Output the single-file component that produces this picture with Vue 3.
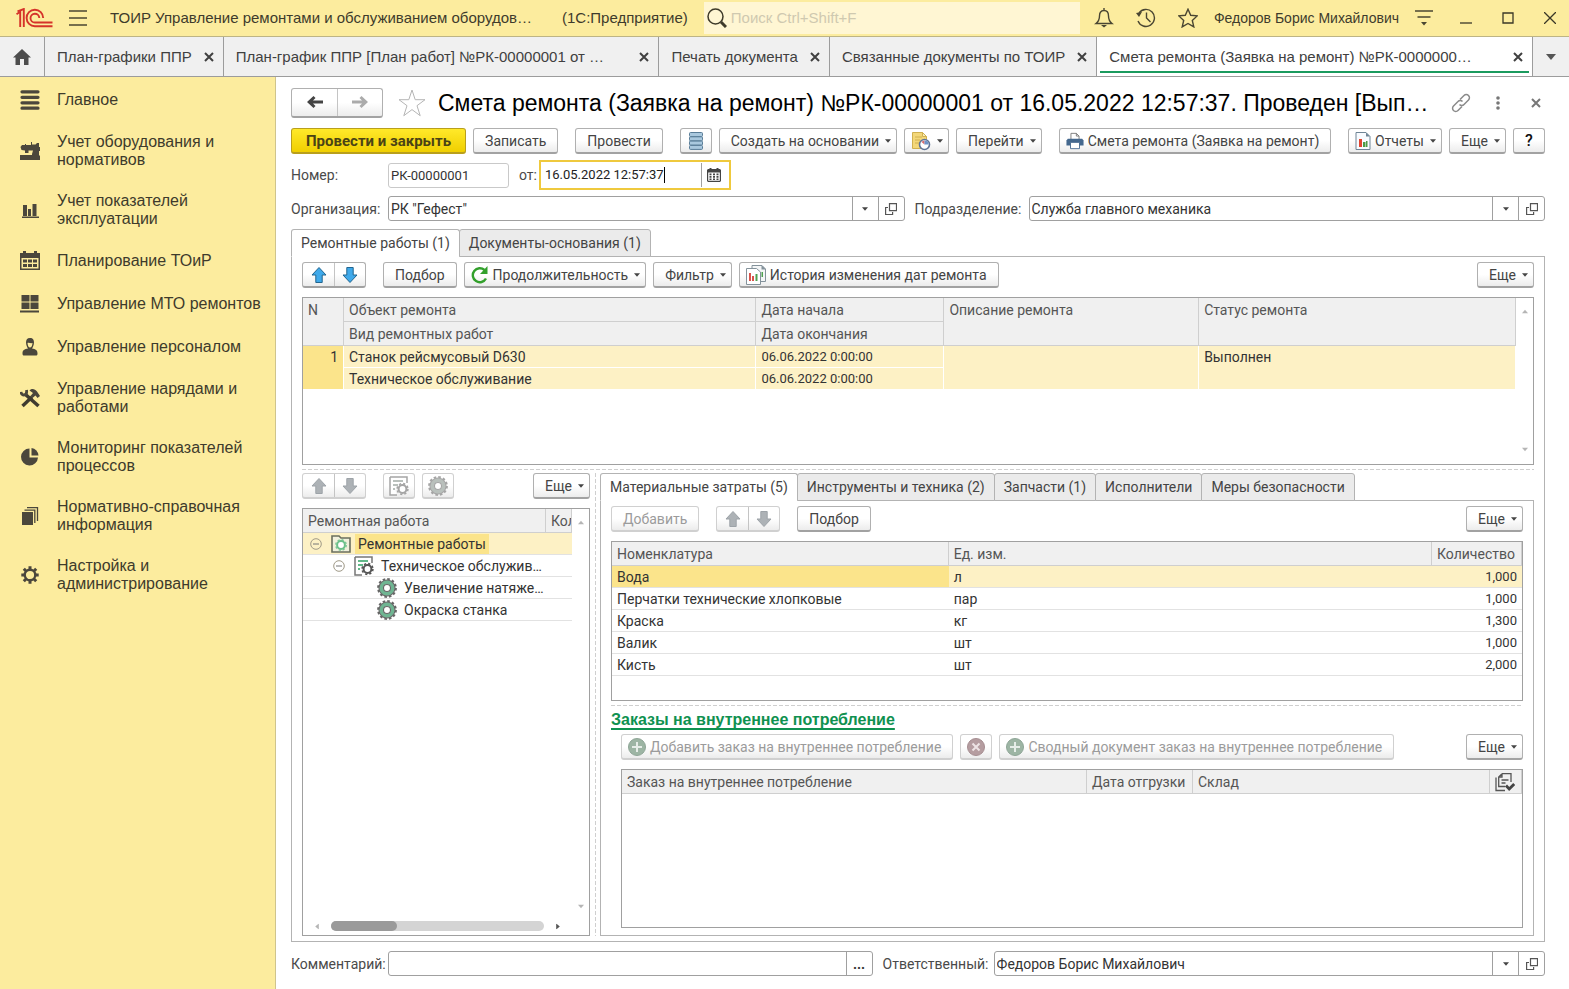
<script setup>
import { ref } from 'vue'

const windowTabs = [
  { title: 'План-графики ППР' },
  { title: 'План-график ППР [План работ] №РК-00000001 от …', wide: true },
  { title: 'Печать документа' },
  { title: 'Связанные документы по ТОИР' },
  { title: 'Смета ремонта (Заявка на ремонт) №РК-0000000…', wide: true, active: true },
]

const sections = [
  { icon: 'main', title: 'Главное' },
  { icon: 'machine', title: 'Учет оборудования и нормативов' },
  { icon: 'bars', title: 'Учет показателей эксплуатации' },
  { icon: 'calendar', title: 'Планирование ТОиР' },
  { icon: 'blocks', title: 'Управление МТО ремонтов' },
  { icon: 'person', title: 'Управление персоналом' },
  { icon: 'tools', title: 'Управление нарядами и работами' },
  { icon: 'pie', title: 'Мониторинг показателей процессов' },
  { icon: 'books', title: 'Нормативно-справочная информация' },
  { icon: 'cog', title: 'Настройка и администрирование' },
]

const works = [
  { level: 0, icon: 'folder-gear', title: 'Ремонтные работы', open: true },
  { level: 1, icon: 'sheet-gear', title: 'Техническое обслужив…', open: true },
  { level: 2, icon: 'gear', title: 'Увеличение натяже…' },
  { level: 2, icon: 'gear', title: 'Окраска станка' },
]

const detailTabs = [
  'Материальные затраты (5)',
  'Инструменты и техника (2)',
  'Запчасти (1)',
  'Исполнители',
  'Меры безопасности',
]

const materials = [
  { name: 'Вода', unit: 'л', qty: '1,000' },
  { name: 'Перчатки технические хлопковые', unit: 'пар', qty: '1,000' },
  { name: 'Краска', unit: 'кг', qty: '1,300' },
  { name: 'Валик', unit: 'шт', qty: '1,000' },
  { name: 'Кисть', unit: 'шт', qty: '2,000' },
]

const number = ref('РК-00000001')
const date = ref('16.05.2022 12:57:37')
const comment = ref('')
</script>

<template>
  <svg class="sprite" aria-hidden="true">
    <symbol id="logo" viewBox="0 0 37 20">
      <g fill="none" stroke="#d5332a" stroke-width="1.900">
        <path d="M.5 6.200 4.200 3.700V19" />
        <path d="M1.500 3.300 7.800 1V19" />
        <path d="M27.200 10A8.300 8.300 0 1 0 19 18.300H36.500" />
        <path d="M23.300 10A4.400 4.400 0 1 0 19 14.500H36.500" />
      </g>
    </symbol>
    <symbol id="home" viewBox="0 0 18 16"><path fill="#4d4d4d" d="M9 0 18 8.500H15.500V16H11V10H7V16H2.500V8.500H0Z" /></symbol>
    <symbol id="burger" viewBox="0 0 18 16"><path stroke="#4a4632" stroke-width="1.400" d="M0 1H18M0 8H18M0 15H18" /></symbol>
    <symbol id="search" viewBox="0 0 20 20"><circle cx="8.500" cy="8.500" r="7.500" fill="none" stroke="#3f3b2b" stroke-width="1.500" /><path stroke="#3f3b2b" stroke-width="3" d="m14 14 5 5" /></symbol>
    <symbol id="bell" viewBox="0 0 18 20"><path fill="none" stroke="#4a4632" stroke-width="1.400" d="M9 2.500C5.500 2.500 4.500 5 4.500 8c0 4-1 5.500-3.500 7.500h16C14.500 13.500 13.500 12 13.500 8c0-3-1-5.500-4.500-5.500ZM9 0v3" /><path fill="#4a4632" d="M6 17h6l-3 2.500Z" /></symbol>
    <symbol id="history" viewBox="0 0 20 20"><path fill="none" stroke="#4a4632" stroke-width="1.400" d="M3 5a8.500 8.500 0 1 1-1 8M10.500 4.500V10l4 4" /><path fill="#4a4632" d="m0 5 6-1-3 5Z" /></symbol>
    <symbol id="star" viewBox="0 0 20 20"><path fill="none" stroke="#4a4632" stroke-width="1.400" d="m10 1.200 2.700 6.100 6.500.6-4.900 4.500 1.500 6.500L10 15.500l-5.800 3.400 1.500-6.500L.8 7.900l6.500-.6Z" /></symbol>
    <symbol id="bigstar" viewBox="0 0 28 28"><path fill="none" stroke="#b5b5b5" d="m14 1 3.200 9.700H27l-8 6 3.200 10L14 20.600 5.800 26.700 9 16.700l-8-6h9.800Z" /></symbol>
    <symbol id="options" viewBox="0 0 18 18"><path stroke="#4a4632" stroke-width="1.500" d="M0 2h18M2.500 8h13" /><path fill="#4a4632" d="M6 13h6l-3 3.500Z" /></symbol>
    <symbol id="minimize" viewBox="0 0 12 12"><path stroke="#3a3727" stroke-width="1.300" d="M0 11h12" /></symbol>
    <symbol id="maximize" viewBox="0 0 12 12"><path fill="none" stroke="#3a3727" stroke-width="1.300" d="M1 1h10v10H1Z" /></symbol>
    <symbol id="close-thin" viewBox="0 0 12 12"><path stroke="#3a3727" stroke-width="1.300" d="m0 0 12 12M12 0 0 12" /></symbol>
    <symbol id="close" viewBox="0 0 10 10"><path stroke="currentColor" stroke-width="2" d="m1 1 8 8M9 1 1 9" /></symbol>
    <symbol id="caret" viewBox="0 0 10 6"><path fill="currentColor" d="M0 0h10L5 6Z" /></symbol>
    <symbol id="back" viewBox="0 0 16 12"><path fill="currentColor" d="m0 6 6.500-6 2 2L6 4.500h10v3H6L8.500 10l-2 2Z" /></symbol>
    <symbol id="forward" viewBox="0 0 16 12"><path fill="currentColor" d="m16 6-6.500-6-2 2L10 4.500H0v3h10L7.500 10l2 2Z" /></symbol>
    <symbol id="link" viewBox="0 0 20 20"><g fill="none" stroke="#8a8a8a" stroke-width="1.500"><path d="M9 6.500 13 2.500a3 3 0 0 1 4.500 4.500l-4.500 4.500a3 3 0 0 1-4.500 0" /><path d="m11 13.500-4 4a3 3 0 0 1-4.500-4.500L7 8.500a3 3 0 0 1 4.500 0" /></g></symbol>
    <symbol id="dots" viewBox="0 0 4 14"><g fill="#777"><circle cx="2" cy="2" r="1.800" /><circle cx="2" cy="7" r="1.800" /><circle cx="2" cy="12" r="1.800" /></g></symbol>

    <symbol id="main" viewBox="0 0 20 20"><path stroke="#4b473c" stroke-width="3.200" stroke-linecap="round" d="M2 1.800h16M2 7.300h16M2 12.800h16M2 18.200h16" /></symbol>
    <symbol id="machine" viewBox="0 0 20 20"><path fill="#4b473c" d="M2 4h3V3h1v1h5V1h1v2.500h3.500L17 2h2v4h1v4h-1v4l1 1v4H0v-5h12v-1l1-3.500H8.500V12H5V9.500L1.500 9 .5 6Z" /></symbol>
    <symbol id="bars" viewBox="0 0 20 20"><path fill="#4b473c" d="M3 5h4v11H3ZM8 9h3v7H8ZM12.500 4h4v12h-4ZM2 16.500h17V18H2Z" /></symbol>
    <symbol id="calendar" viewBox="0 0 20 20"><path fill="#4b473c" fill-rule="evenodd" d="M0 2h3V0h3v2h8V0h3v2h3v17H0ZM1.500 7v10.500h17V7Z" /><path fill="#4b473c" d="M3 8.500h4v3H3Zm5 0h4v3H8Zm5 0h4v3h-4ZM3 13h4v3H3Zm5 0h4v3H8Zm5 0h4v3h-4Z" /></symbol>
    <symbol id="blocks" viewBox="0 0 20 20"><path fill="#4b473c" d="M1.500 1h8v6.500h-8Zm9 0h8v6.500h-8ZM1.500 8.500h8V15h-8Zm9 0h8V15h-8ZM0 16.500h19v2H0Z" /></symbol>
    <symbol id="person" viewBox="0 0 20 20"><path fill="#4b473c" fill-rule="evenodd" d="M10 1c3 0 4 2 4 4.500S12.500 11 12 11.500c3.500.5 5.500 1.500 5.500 5 0 1.500-.5 2-1.500 2H4c-1 0-1.500-.5-1.500-2 0-3.500 2-4.500 5.500-5C7.500 11 6 8 6 5.500S7 1 10 1ZM7.500 6c.3 3 1.200 4.500 2.500 4.500S12.200 9 12.500 6C11 6.500 9 5.500 7.500 6Z" /></symbol>
    <symbol id="tools" viewBox="0 0 20 20"><path fill="none" stroke="#3f3b30" stroke-width="3.600" d="m5.500 6.500 13 11.500" /><path fill="none" stroke="#3f3b30" stroke-width="3.400" d="M2.500 18 12 9" /><path fill="none" stroke="#4b473c" stroke-width="2.800" d="M1 4C1.500 8.500 7.500 8 6.500 2" /><path fill="#4b473c" d="M9.500 2.500C12 0 15 1 17 3.500L20 8l-2.500 2-2-2.500-3 2.500-2-2 2.500-3Z" /></symbol>
    <symbol id="pie" viewBox="0 0 20 20"><path fill="#4b473c" d="M9.500 1.500v9H18a8.500 8.500 0 1 1-8.500-9Z" /><path fill="#4b473c" d="M11.500 1a8 8 0 0 1 7 7.500h-7Z" /></symbol>
    <symbol id="books" viewBox="0 0 20 20"><path fill="#4b473c" d="M2 6h11v13H2Z" /><path fill="none" stroke="#4b473c" stroke-width="1.300" d="M4.500 4.200h10.300V17M7 1.700h10.500V15" /></symbol>
    <symbol id="cog" viewBox="0 0 20 20"><circle cx="10" cy="10" r="5.300" fill="none" stroke="#4b473c" stroke-width="2.400" /><path stroke="#4b473c" stroke-width="3" d="M10 1.300v3M10 15.700v3M1.300 10h3M15.700 10h3M3.800 3.800 6 6M14 14l2.200 2.200M16.200 3.800 14 6M6 14l-2.200 2.200" /></symbol>

    <symbol id="register" viewBox="0 0 14 18"><g fill="#a9c8de" stroke="#587c97"><rect x=".5" y=".5" width="13" height="4" rx="1" /><rect x=".5" y="4.800" width="13" height="4" rx="1" /><rect x=".5" y="9.100" width="13" height="4" rx="1" /><rect x=".5" y="13.400" width="13" height="4" rx="1" /></g></symbol>
    <symbol id="doc-clock" viewBox="0 0 20 20"><path fill="#f3d779" stroke="#d0b050" d="M1.500 1.500h10l4 4v12h-14Z" /><path fill="#fbeeb8" stroke="#d0b050" d="M11.500 1.500v4h4Z" /><path stroke="#d0b050" d="M4 6h7M4 9h5M4 12h4" /><circle cx="13.500" cy="13.500" r="5" fill="#fff" stroke="#5f7396" stroke-width="1.600" /><path fill="#d9696b" d="M13.500 13.500V9.500a4 4 0 0 0-3 1.500Z" /><path fill="#6d93c8" d="M13.500 13.500V9.500a4 4 0 0 1 4 4Z" /></symbol>
    <symbol id="printer" viewBox="0 0 20 20"><path fill="#fff" stroke="#777" d="M5.500 8V1.500h6l3 3V8" /><path fill="none" stroke="#777" d="M11.500 1.500v3h3" /><path fill="#44688e" d="M2 7.500h16l1.500 2V15h-19V9.500Z" /><path fill="#fff" stroke="#44688e" d="M5 11.500h10v7H5Z" /></symbol>
    <symbol id="report" viewBox="0 0 16 18"><path fill="#f8fbff" stroke="#6f8596" d="M1 .5h10l4 4v13H1Z" /><path fill="#6f8596" d="M11 .5v4h4Z" /><path fill="#e0442f" d="M4 7h3v8H4Z" /><path fill="#4c9a45" d="M8 10h2.500v5H8ZM11 9h1.500v6H11Z" /></symbol>
    <symbol id="reports" viewBox="0 0 20 20"><path fill="#f4f6f7" stroke="#84929b" d="M6 .5h10l3.500 3.500v12.500H6Z" /><path fill="#84929b" d="M15.500 0v4.500H20Z" /><path fill="#fff" stroke="#84929b" d="M.5 3.500h10l4 3.500v12.500H.5Z" /><path fill="#d9534b" d="M3 8h2v8H3ZM6 11h2v5H6Z" /><path fill="#4fa150" d="M9.500 9h2v7h-2ZM15.500 7h1.500v5h-1.500Z" /></symbol>
    <symbol id="refresh" viewBox="0 0 18 18"><path fill="none" stroke="#33a02c" stroke-width="2.400" d="M13.500 4A7 7 0 1 0 15 12.500" /><path fill="#33a02c" d="M16.500 0v8H9Z" /></symbol>
    <symbol id="up" viewBox="0 0 16 18"><path fill="currentColor" stroke="var(--edge)" stroke-linejoin="round" d="m8 1.500 7 7.500h-3.800v7.500H4.800V9H1Z" /></symbol>
    <symbol id="down" viewBox="0 0 16 18"><path fill="currentColor" stroke="var(--edge)" stroke-linejoin="round" d="M8 16.500 1 9h3.800V1.500h6.400V9H15Z" /></symbol>
    <symbol id="date" viewBox="0 0 14 14"><path fill="#444" fill-rule="evenodd" d="M1 1h1.500V0h2v1h5V0h2v1H13l1 1v11l-1 1H1l-1-1V2ZM1.200 4.500v8.300h11.600V4.500Z" /><path fill="#444" d="M2.500 5.500h2v1.700h-2Zm3.500 0h2v1.700H6Zm3.500 0h2v1.700h-2ZM2.500 8h2v1.700h-2ZM6 8h2v1.700H6Zm3.500 0h2v1.700h-2Zm-7 2.500h2V12h-2Zm3.500 0h2V12H6Zm3.500 0h2V12h-2Z" /></symbol>
    <symbol id="open" viewBox="0 0 12 12"><path fill="none" stroke="#555" stroke-width="1.200" d="M4.500.6h7v7h-7ZM3 4.500H.6v7h7V9" /></symbol>
    <symbol id="folder-gear" viewBox="0 0 20 20"><path fill="#f1f0dc" stroke="#6a6f5e" stroke-width="1.600" d="M1 2h7l2 2h9v14H1Z" /><circle cx="10" cy="11" r="5.300" fill="none" stroke="#7cc896" stroke-width="1.300" stroke-dasharray="2.200 1.960" /><circle cx="10" cy="11" r="3.900" fill="#fff" stroke="#6cc08a" stroke-width="2" /></symbol>
    <symbol id="sheet-gear" viewBox="0 0 20 20"><path fill="#fff" stroke="var(--sheet, #777)" stroke-width="1.500" d="M1 1h17v6M1 1v18h7" /><path stroke="var(--mark, #62b889)" stroke-width="1.800" d="M4 5h10M4 9h5M4 13h2" /><circle cx="13.500" cy="13" r="5.400" fill="none" stroke="var(--sheet, #555)" stroke-width="1.600" stroke-dasharray="2.200 2.040" /><circle cx="13.500" cy="13" r="3.900" fill="#fff" stroke="var(--sheet, #555)" stroke-width="2" /></symbol>
    <symbol id="gear" viewBox="0 0 20 20"><circle cx="10" cy="10" r="8.900" fill="none" stroke="var(--sheet, #666)" stroke-width="2" stroke-dasharray="2.600 2.060" /><circle cx="10" cy="10" r="5.800" fill="#fff" stroke="var(--mark, #6fb592)" stroke-width="4.200" /><circle cx="10" cy="10" r="8" fill="none" stroke="var(--sheet, #666)" stroke-width="1.100" /><circle cx="10" cy="10" r="3.500" fill="#fff" stroke="var(--sheet, #666)" stroke-width="1.100" /></symbol>
    <symbol id="minus" viewBox="0 0 12 12"><circle cx="6" cy="6" r="5.300" fill="none" stroke="#a09a88" /><path stroke="#777" d="M3 6h6" /></symbol>
    <symbol id="plus" viewBox="0 0 18 18"><circle cx="9" cy="9" r="8.500" fill="#9db5a4" stroke="#8ea596" /><path stroke="#e6ede8" stroke-width="2" d="M9 4v10M4 9h10" /></symbol>
    <symbol id="remove" viewBox="0 0 18 18"><circle cx="9" cy="9" r="8.500" fill="#b59da0" stroke="#a58d90" /><path stroke="#eee4e5" stroke-width="2" d="m5.500 5.500 7 7M12.500 5.500l-7 7" /></symbol>
    <symbol id="copies" viewBox="0 0 20 20"><path fill="none" stroke="#555" stroke-width="1.300" d="M7 1.700h9V10M7 1.700 3.700 5v9.500H10M3.700 5H7V1.700M1 5.500v13h9M6.500 8h7M6.500 11h4" /><path fill="none" stroke="#444" stroke-width="2.800" d="m11 13.500 3.200 3.500 5-5" /></symbol>
  </svg>

  <div class="app">
    <header class="titlebar">
      <svg class="logo"><use href="#logo" /></svg>
      <button class="bare" aria-label="Меню"><svg class="i18x16"><use href="#burger" /></svg></button>
      <span class="app-name">ТОИР Управление ремонтами и обслуживанием оборудов…</span>
      <span class="platform">(1С:Предприятие)</span>
      <label class="search">
        <svg class="i20"><use href="#search" /></svg>
        <input type="text" placeholder="Поиск Ctrl+Shift+F" aria-label="Поиск" />
      </label>
      <nav class="sys">
        <button class="bare" aria-label="Уведомления"><svg class="i20"><use href="#bell" /></svg></button>
        <button class="bare" aria-label="История"><svg class="i20"><use href="#history" /></svg></button>
        <button class="bare" aria-label="Избранное"><svg class="i20"><use href="#star" /></svg></button>
      </nav>
      <a class="user" href="#">Федоров Борис Михайлович</a>
      <button class="bare opts" aria-label="Настройки"><svg class="i18"><use href="#options" /></svg></button>
      <div class="winctl">
        <button class="bare" aria-label="Свернуть"><svg class="i12"><use href="#minimize" /></svg></button>
        <button class="bare" aria-label="Развернуть"><svg class="i12"><use href="#maximize" /></svg></button>
        <button class="bare" aria-label="Закрыть"><svg class="i12"><use href="#close-thin" /></svg></button>
      </div>
    </header>

    <nav class="wintabs">
      <button class="home" aria-label="Начальная страница"><svg class="i18x16"><use href="#home" /></svg></button>
      <div v-for="t in windowTabs" :key="t.title" class="wintab" :class="{ wide: t.wide, active: t.active }">
        <a href="#">{{ t.title }}</a>
        <button class="bare" aria-label="Закрыть вкладку"><svg class="i10"><use href="#close" /></svg></button>
      </div>
      <button class="more-tabs" aria-label="Все вкладки"><svg class="i10x6"><use href="#caret" /></svg></button>
    </nav>

    <div class="body">
      <nav class="sidebar">
        <a v-for="s in sections" :key="s.icon" href="#">
          <svg class="i20"><use :href="'#' + s.icon" /></svg>
          <span>{{ s.title }}</span>
        </a>
      </nav>

      <main class="form">
        <div class="heading">
          <div class="pair nav-pair">
            <button aria-label="Назад"><svg class="i16x12"><use href="#back" /></svg></button>
            <button aria-label="Вперед" class="faded"><svg class="i16x12"><use href="#forward" /></svg></button>
          </div>
          <svg class="i28"><use href="#bigstar" /></svg>
          <h1>Смета ремонта (Заявка на ремонт) №РК-00000001 от 16.05.2022 12:57:37. Проведен [Вып…</h1>
          <div class="head-tools">
            <button class="bare" aria-label="Ссылка"><svg class="i20"><use href="#link" /></svg></button>
            <button class="bare" aria-label="Действия"><svg class="i4x14"><use href="#dots" /></svg></button>
            <button class="bare shut" aria-label="Закрыть"><svg class="i10"><use href="#close" /></svg></button>
          </div>
        </div>

        <div class="toolbar commands">
          <button class="btn primary">Провести и закрыть</button>
          <button class="btn">Записать</button>
          <button class="btn apart">Провести</button>
          <button class="btn icon apart" aria-label="Движения"><svg class="i14x18"><use href="#register" /></svg></button>
          <button class="btn drop">Создать на основании<svg class="tri"><use href="#caret" /></svg></button>
          <button class="btn drop pic" aria-label="Графики"><svg class="i20"><use href="#doc-clock" /></svg><svg class="tri"><use href="#caret" /></svg></button>
          <button class="btn drop">Перейти<svg class="tri"><use href="#caret" /></svg></button>
          <button class="btn pic apart"><svg class="i18"><use href="#printer" /></svg>Смета ремонта (Заявка на ремонт)</button>
          <button class="btn drop pic push"><svg class="i16x18"><use href="#report" /></svg>Отчеты<svg class="tri"><use href="#caret" /></svg></button>
          <button class="btn drop">Еще<svg class="tri"><use href="#caret" /></svg></button>
          <button class="btn icon help">?</button>
        </div>

        <div class="line number-line">
          <label class="cap" for="number">Номер:</label>
          <input id="number" v-model="number" class="text number" type="text" />
          <label class="from" for="date">от:</label>
          <div class="datebox">
            <input id="date" v-model="date" type="text" />
            <i class="cursor"></i>
            <button aria-label="Выбрать дату"><svg class="i14"><use href="#date" /></svg></button>
          </div>
        </div>

        <div class="line org-line">
          <label class="cap" for="org">Организация:</label>
          <div class="combo">
            <select id="org"><option>РК "Гефест"</option></select>
            <span class="arrow"><svg class="tri"><use href="#caret" /></svg></span>
            <button aria-label="Открыть организацию"><svg class="i12"><use href="#open" /></svg></button>
          </div>
          <label class="cap2" for="dep">Подразделение:</label>
          <div class="combo">
            <select id="dep"><option>Служба главного механика</option></select>
            <span class="arrow"><svg class="tri"><use href="#caret" /></svg></span>
            <button aria-label="Открыть подразделение"><svg class="i12"><use href="#open" /></svg></button>
          </div>
        </div>

        <div class="tabs main-tabs">
          <button class="active">Ремонтные работы (1)</button>
          <button>Документы-основания (1)</button>
        </div>

        <section class="page">
          <div class="toolbar">
            <div class="pair blue">
              <button aria-label="Вверх"><svg class="i16x18"><use href="#up" /></svg></button>
              <button aria-label="Вниз"><svg class="i16x18"><use href="#down" /></svg></button>
            </div>
            <button class="btn apart">Подбор</button>
            <button class="btn drop pic"><svg class="i18"><use href="#refresh" /></svg>Продолжительность<svg class="tri"><use href="#caret" /></svg></button>
            <button class="btn drop">Фильтр<svg class="tri"><use href="#caret" /></svg></button>
            <button class="btn pic"><svg class="i20"><use href="#reports" /></svg>История изменения дат ремонта</button>
            <button class="btn drop push">Еще<svg class="tri"><use href="#caret" /></svg></button>
          </div>

          <div class="grid repairs">
            <div class="grid-view">
              <table>
                <colgroup><col class="c-n" /><col class="c-object" /><col class="c-date" /><col class="c-note" /><col /></colgroup>
                <thead>
                  <tr><th rowspan="2">N</th><th>Объект ремонта</th><th>Дата начала</th><th rowspan="2">Описание ремонта</th><th rowspan="2">Статус ремонта</th></tr>
                  <tr><th>Вид ремонтных работ</th><th>Дата окончания</th></tr>
                </thead>
                <tbody>
                  <tr class="sel"><td rowspan="2" class="cur num">1</td><td>Станок рейсмусовый D630</td><td class="fig">06.06.2022 0:00:00</td><td rowspan="2"></td><td rowspan="2">Выполнен</td></tr>
                  <tr class="sel"><td>Техническое обслуживание</td><td class="fig">06.06.2022 0:00:00</td></tr>
                </tbody>
              </table>
            </div>
            <div class="vscroll"><svg class="sa flip"><use href="#caret" /></svg><svg class="sa"><use href="#caret" /></svg></div>
          </div>

          <div class="hsplit"></div>

          <div class="lower">
            <section class="works">
              <div class="toolbar">
                <div class="pair gray">
                  <button disabled aria-label="Вверх"><svg class="i16x18"><use href="#up" /></svg></button>
                  <button disabled aria-label="Вниз"><svg class="i16x18"><use href="#down" /></svg></button>
                </div>
                <button class="btn icon apart dim" disabled aria-label="Добавить вид работ"><svg class="i20"><use href="#sheet-gear" /></svg></button>
                <button class="btn icon dim" disabled aria-label="Добавить работу"><svg class="i20"><use href="#gear" /></svg></button>
                <button class="btn drop push">Еще<svg class="tri"><use href="#caret" /></svg></button>
              </div>
              <div class="grid tree">
                <div class="grid-view">
                  <table>
                    <colgroup><col /><col class="c-kol" /></colgroup>
                    <thead><tr><th>Ремонтная работа</th><th>Кол</th></tr></thead>
                    <tbody>
                      <tr v-for="(w, i) in works" :key="w.title" :class="{ sel: i === 0 }">
                        <td>
                          <div class="node" :class="'l' + w.level">
                            <button v-if="w.open" class="bare" aria-label="Свернуть"><svg class="i12"><use href="#minus" /></svg></button>
                            <svg class="i20"><use :href="'#' + w.icon" /></svg>
                            <span :class="{ cur: i === 0 }">{{ w.title }}</span>
                          </div>
                        </td>
                        <td></td>
                      </tr>
                    </tbody>
                  </table>
                  <div class="hscroll">
                    <svg class="sa left"><use href="#caret" /></svg>
                    <div class="track"><div class="thumb"></div></div>
                    <svg class="sa right"><use href="#caret" /></svg>
                  </div>
                </div>
                <div class="vscroll"><svg class="sa flip"><use href="#caret" /></svg><svg class="sa low"><use href="#caret" /></svg></div>
              </div>
            </section>

            <div class="vsplit"></div>

            <section class="details">
              <div class="tabs">
                <button v-for="(t, i) in detailTabs" :key="t" :class="{ active: i === 0 }">{{ t }}</button>
              </div>
              <div class="page inner">
                <div class="toolbar">
                  <button class="btn" disabled>Добавить</button>
                  <div class="pair gray apart">
                    <button disabled aria-label="Вверх"><svg class="i16x18"><use href="#up" /></svg></button>
                    <button disabled aria-label="Вниз"><svg class="i16x18"><use href="#down" /></svg></button>
                  </div>
                  <button class="btn apart">Подбор</button>
                  <button class="btn drop push">Еще<svg class="tri"><use href="#caret" /></svg></button>
                </div>
                <div class="grid materials">
                  <div class="grid-view">
                    <table>
                      <colgroup><col class="c-name" /><col /><col class="c-qty" /></colgroup>
                      <thead><tr><th>Номенклатура</th><th>Ед. изм.</th><th>Количество</th></tr></thead>
                      <tbody>
                        <tr v-for="(m, i) in materials" :key="m.name" :class="{ sel: i === 0 }">
                          <td :class="{ cur: i === 0 }">{{ m.name }}</td><td>{{ m.unit }}</td><td class="num fig">{{ m.qty }}</td>
                        </tr>
                      </tbody>
                    </table>
                  </div>
                </div>
                <div class="hsplit"></div>
                <h2><a href="#">Заказы на внутреннее потребление</a></h2>
                <div class="orders">
                  <div class="toolbar">
                    <button class="btn pic" disabled><svg class="i18"><use href="#plus" /></svg>Добавить заказ на внутреннее потребление</button>
                    <button class="btn icon" disabled aria-label="Удалить"><svg class="i18"><use href="#remove" /></svg></button>
                    <button class="btn pic" disabled><svg class="i18"><use href="#plus" /></svg>Сводный документ заказ на внутреннее потребление</button>
                    <button class="btn drop push">Еще<svg class="tri"><use href="#caret" /></svg></button>
                  </div>
                  <div class="grid fill">
                    <div class="grid-view">
                      <table>
                        <colgroup><col /><col class="c-ship" /><col class="c-store" /><col class="c-mark" /></colgroup>
                        <thead><tr><th>Заказ на внутреннее потребление</th><th>Дата отгрузки</th><th>Склад</th><th class="mark" aria-label="Проведен"><svg class="i20"><use href="#copies" /></svg></th></tr></thead>
                      </table>
                    </div>
                  </div>
                </div>
              </div>
            </section>
          </div>
        </section>

        <div class="line footer-line">
          <label class="cap" for="comment">Комментарий:</label>
          <div class="combo comment">
            <input id="comment" v-model="comment" type="text" />
            <button class="ell" aria-label="Редактировать комментарий">...</button>
          </div>
          <label class="cap2" for="resp">Ответственный:</label>
          <div class="combo resp">
            <select id="resp"><option>Федоров Борис Михайлович</option></select>
            <span class="arrow"><svg class="tri"><use href="#caret" /></svg></span>
            <button aria-label="Открыть ответственного"><svg class="i12"><use href="#open" /></svg></button>
          </div>
        </div>
      </main>
    </div>
  </div>
</template>

<style>
body { margin: 0; background: #fff; }
</style>

<style scoped>
* { box-sizing: border-box; }
.sprite { position: absolute; width: 0; height: 0; }
svg { flex: none; display: block; }
.i4x14 { width: 4px; height: 14px; }
.i10 { width: 10px; height: 10px; }
.i10x6 { width: 10px; height: 6px; }
.i12 { width: 12px; height: 12px; }
.i14 { width: 14px; height: 14px; }
.i14x18 { width: 14px; height: 18px; }
.i16x12 { width: 16px; height: 12px; }
.i16x18 { width: 16px; height: 18px; }
.i18 { width: 18px; height: 18px; }
.i18x16 { width: 18px; height: 16px; }
.i20 { width: 20px; height: 20px; }
.i28 { width: 28px; height: 28px; }
button, input, select { font: inherit; color: inherit; margin: 0; }
a { color: inherit; text-decoration: none; }
.bare { display: flex; padding: 0; border: 0; background: none; color: inherit; }

.app {
  display: flex;
  flex-direction: column;
  min-height: 100vh;
  font: 14px/18px Roboto, "Liberation Sans", sans-serif;
  color: #4a4a4a;
}

.titlebar {
  display: flex;
  align-items: center;
  height: 37px;
  padding: 0 13px 0 16px;
  background: #fcec9e;
  border-bottom: 1px solid #bdb485;
  font: 15px/20px "Liberation Sans", Arial, sans-serif;
  color: #3e3b2c;
  white-space: nowrap;
}
.logo { width: 37px; height: 20px; margin-right: 16px; }
.app-name { margin-left: 23px; }
.platform { margin: 0 16px 0 30px; }
.search {
  display: flex;
  align-items: center;
  flex: 1;
  gap: 4px;
  height: 32px;
  padding-left: 3px;
  background: #fff6d3;
}
.search input { flex: 1; min-width: 0; padding: 0; border: 0; background: none; outline: 0; }
.search input::placeholder { color: #cfc9b0; opacity: 1; }
.sys { display: flex; gap: 22px; margin: 0 16px 0 14px; }
.user { font-size: 14px; }
.opts { margin: 0 27px 0 16px; }
.winctl { display: flex; gap: 30px; }

.wintabs {
  display: flex;
  height: 40px;
  background: #f0f0f0;
  border-bottom: 1px solid #9c9c9c;
  font: 15px/20px "Liberation Sans", Arial, sans-serif;
  color: #404040;
  white-space: nowrap;
}
.home, .more-tabs { display: flex; align-items: center; justify-content: center; padding: 0; border: 0; background: none; color: #555; }
.home { width: 44px; }
.more-tabs { width: 37px; border-left: 1px solid #9c9c9c; }
.wintab { display: flex; align-items: center; gap: 12px; padding: 0 9px 0 12px; border-left: 1px solid #9c9c9c; }
.wintab a { flex: 1; }
.wintab.wide { flex: 1 1 0; min-width: 0; }
.wintab.active { position: relative; background: #fff; }
.wintab.active::after { content: ""; position: absolute; left: 3px; right: 3px; bottom: 3px; height: 2px; background: #1b9a5e; }

.body { display: flex; flex: 1; }
.sidebar {
  flex: none;
  width: 276px;
  padding-top: 2px;
  background: #fcec9e;
  border-right: 1px solid #cfc48c;
  font: 16px/18px "Liberation Sans", Arial, sans-serif;
  color: #3e3b2c;
}
.sidebar a { display: flex; align-items: center; gap: 17px; min-height: 43px; padding: 11px 6px 12px 20px; }

.form { display: flex; flex-direction: column; flex: 1; min-width: 0; padding: 11px 24px 13px 15px; }

.heading { display: flex; align-items: center; height: 29px; }
.heading > .i28 { margin: 0 12px 0 15px; }
h1 { flex: 1; margin: 0; font: 23px/28px "Liberation Sans", Arial, sans-serif; color: #000; white-space: nowrap; }
.head-tools { display: flex; align-items: center; gap: 25px; padding-right: 4px; color: #777; }
.shut { margin-left: 6px; }

.toolbar { display: flex; align-items: center; gap: 7px; height: 26px; white-space: nowrap; }
.commands { margin-top: 11px; }
.btn {
  display: flex;
  align-items: center;
  justify-content: center;
  height: 26px;
  padding: 0 11px;
  border: 1px solid #b0b0b0;
  border-bottom: 2px solid #a2a2a2;
  border-radius: 3px;
  background: linear-gradient(#fff 50%, #ececec);
  color: #444;
}
.btn.primary { padding: 0 14px; border-color: #b99f1c; background: linear-gradient(#ffe92a, #f0cf00); font-size: 15px; font-weight: bold; color: #4a4315; }
.btn.drop { padding-right: 5px; }
.btn.drop > .tri { margin-left: 6px; }
.btn.pic { padding-left: 6px; gap: 4px; }
.btn.pic.drop > .tri { margin-left: 2px; }
.btn.icon { width: 32px; padding: 0; }
.btn.help { font-size: 16px; font-weight: 500; color: #111; }
.btn:disabled { border-color: #d0d0d0; color: #9b9b9b; }
.dim { --sheet: #a5a5a5; --mark: #b9c0bc; }
.apart { margin-left: 10px; }
.push { margin-left: auto; }
.tri { width: 6px; height: 4px; color: #444; }

.pair {
  display: flex;
  height: 26px;
  border: 1px solid #b0b0b0;
  border-bottom: 2px solid #a2a2a2;
  border-radius: 3px;
  background: linear-gradient(#fff 50%, #ececec);
}
.pair button { display: flex; align-items: center; justify-content: center; width: 31px; padding: 0; border: 0; background: none; color: inherit; }
.pair button + button { border-left: 1px solid #c4c4c4; }
.nav-pair { height: 30px; color: #444; }
.nav-pair button { width: 45px; }
.nav-pair .faded { color: #ababab; }
.blue { color: #3fa9ea; --edge: #21658f; }
.gray { border-color: #d0d0d0; color: #adb2b6; --edge: #9da3a8; }

.line { display: flex; align-items: center; white-space: nowrap; }
.cap { width: 97px; }
.number-line { height: 30px; margin-top: 6px; }
.text { height: 25px; padding: 0 2px; border: 1px solid #c9c9c9; border-radius: 3px; color: #333; }
.number { width: 121px; font-size: 13px; }
.from { margin: 0 2px 0 10px; }
.datebox { position: relative; display: flex; align-items: center; width: 192px; height: 30px; border: 2px solid #efc93d; font-size: 13px; color: #222; }
.datebox input { flex: 1; min-width: 0; padding: 0 4px; border: 0; outline: 0; }
.datebox button { display: flex; align-items: center; height: 24px; padding: 0 8px 0 5px; border: 0; border-left: 1px solid #a0a0a0; background: none; }
.cursor { position: absolute; left: 123px; top: 5px; width: 1px; height: 16px; background: #000; }

.org-line { margin-top: 6px; }
.combo {
  display: flex;
  flex: 1;
  min-width: 0;
  height: 25px;
  border: 1px solid #a0a0a0;
  border-radius: 3px;
  background: #fff;
  position: relative;
  color: #333;
}
.combo select, .combo input { flex: 1; min-width: 0; padding: 0 2px; border: 0; background: none; outline: 0; appearance: none; }
.combo button { display: flex; align-items: center; justify-content: center; width: 26px; padding: 0; border: 0; border-left: 1px solid #a0a0a0; background: none; }
.arrow { position: absolute; top: 0; right: 26px; display: flex; align-items: center; justify-content: center; width: 26px; height: 100%; border-left: 1px solid #a0a0a0; pointer-events: none; }
.cap2 { width: 114px; margin-left: 10px; }
.footer-line { margin-top: 9px; }
.footer-line .cap2 { width: 111px; }
.comment { flex: 484; }
.resp { flex: 551; }
.combo .ell { font-weight: bold; }

.tabs { display: flex; height: 28px; margin-bottom: -1px; position: relative; white-space: nowrap; }
.main-tabs { margin-top: 8px; }
.tabs button { padding: 0 9px; margin-left: -1px; border: 1px solid #b3b3b3; border-radius: 3px 3px 0 0; background: #ebebeb; color: #444; }
.tabs button:first-child { margin-left: 0; }
.tabs .active { background: #fff; border-bottom-color: #fff; }

.page { display: flex; flex-direction: column; flex: 1; padding: 5px 10px; border: 1px solid #b3b3b3; }
.grid { display: flex; margin-top: 9px; border: 1px solid #a0a0a0; }
.grid-view { display: flex; flex-direction: column; flex: 1; min-width: 0; }
.repairs { min-height: 168px; }
table { width: 100%; table-layout: fixed; border-collapse: separate; border-spacing: 0; }
th, td { height: 22px; padding: 0 5px; overflow: hidden; white-space: nowrap; text-align: left; font-weight: normal; line-height: 18px; }
th { height: 24px; background: #f0f0f0; border-right: 1px solid #cfcfcf; border-bottom: 1px solid #cfcfcf; color: #555; vertical-align: top; padding-top: 3px; }
th:last-child { padding-right: 0; }
td { color: #333; border-bottom: 1px solid #e2e2e2; }
.repairs td { vertical-align: top; padding-top: 2px; }
.repairs td { border-right: 1px solid #fff; border-bottom-color: #fff; }
.sel td { background: #fdf1c5; }
.sel td.cur, .node .cur { background: #fbe48b; }
.num { text-align: right; }
.fig { font-size: 13px; }
th.mark { padding-top: 2px; }
.c-n { width: 41px; }
.c-object { width: 34%; }
.c-date { width: 188px; }
.c-note { width: 21%; }
.c-kol { width: 26px; }
.c-name { width: 37%; }
.c-qty { width: 90px; }
.c-ship { width: 106px; }
.c-store { width: 33%; }
.c-mark { width: 32px; }
.vscroll { display: flex; flex-direction: column; justify-content: space-between; align-items: center; width: 17px; padding: 11px 0 12px; color: #c0c0c0; }
.sa { width: 6px; height: 5px; color: #b5b5b5; }
.flip { transform: rotate(180deg); }
.left { transform: rotate(90deg); }
.right { transform: rotate(-90deg); color: #555; }

.hsplit { height: 1px; margin: 4px 0 3px; background: repeating-linear-gradient(90deg, #cfcfcf 0 4px, transparent 4px 6px); }
.vsplit { flex: none; width: 1px; margin: 0 4px 0 5px; background: repeating-linear-gradient(#cfcfcf 0 4px, transparent 4px 6px); }
.lower { display: flex; flex: 1; }
.works { display: flex; flex-direction: column; flex: none; width: 288px; }
.tree { flex: 1; }
.tree td { padding: 0; }
.tree .vscroll .low { margin-bottom: 14px; }
.node { display: flex; align-items: center; height: 21px; padding-top: 1px; }
.node > .i20 { margin: 0 4px 0 9px; }
.node span { padding: 1px 3px; line-height: 19px; }
.l0 { padding-left: 7px; }
.l1 { padding-left: 30px; }
.l2 { padding-left: 65px; }
.hscroll { display: flex; align-items: center; gap: 11px; margin-top: auto; padding: 0 11px 4px; }
.track { flex: 1; height: 10px; border-radius: 5px; background: #d4d4d4; }
.thumb { width: 31%; height: 10px; border-radius: 5px; background: #9a9a9a; }

.details { display: flex; flex-direction: column; flex: 1; min-width: 0; }
.materials { min-height: 160px; }
h2 { margin: 0; font: bold 16px/22px "Liberation Sans", Arial, sans-serif; color: #0f9150; }
h2 a { text-decoration: underline; text-decoration-thickness: 2px; text-underline-offset: 3px; }
.orders { display: flex; flex-direction: column; flex: 1; margin: 3px 0 2px 10px; }
.fill { flex: 1; }
</style>
